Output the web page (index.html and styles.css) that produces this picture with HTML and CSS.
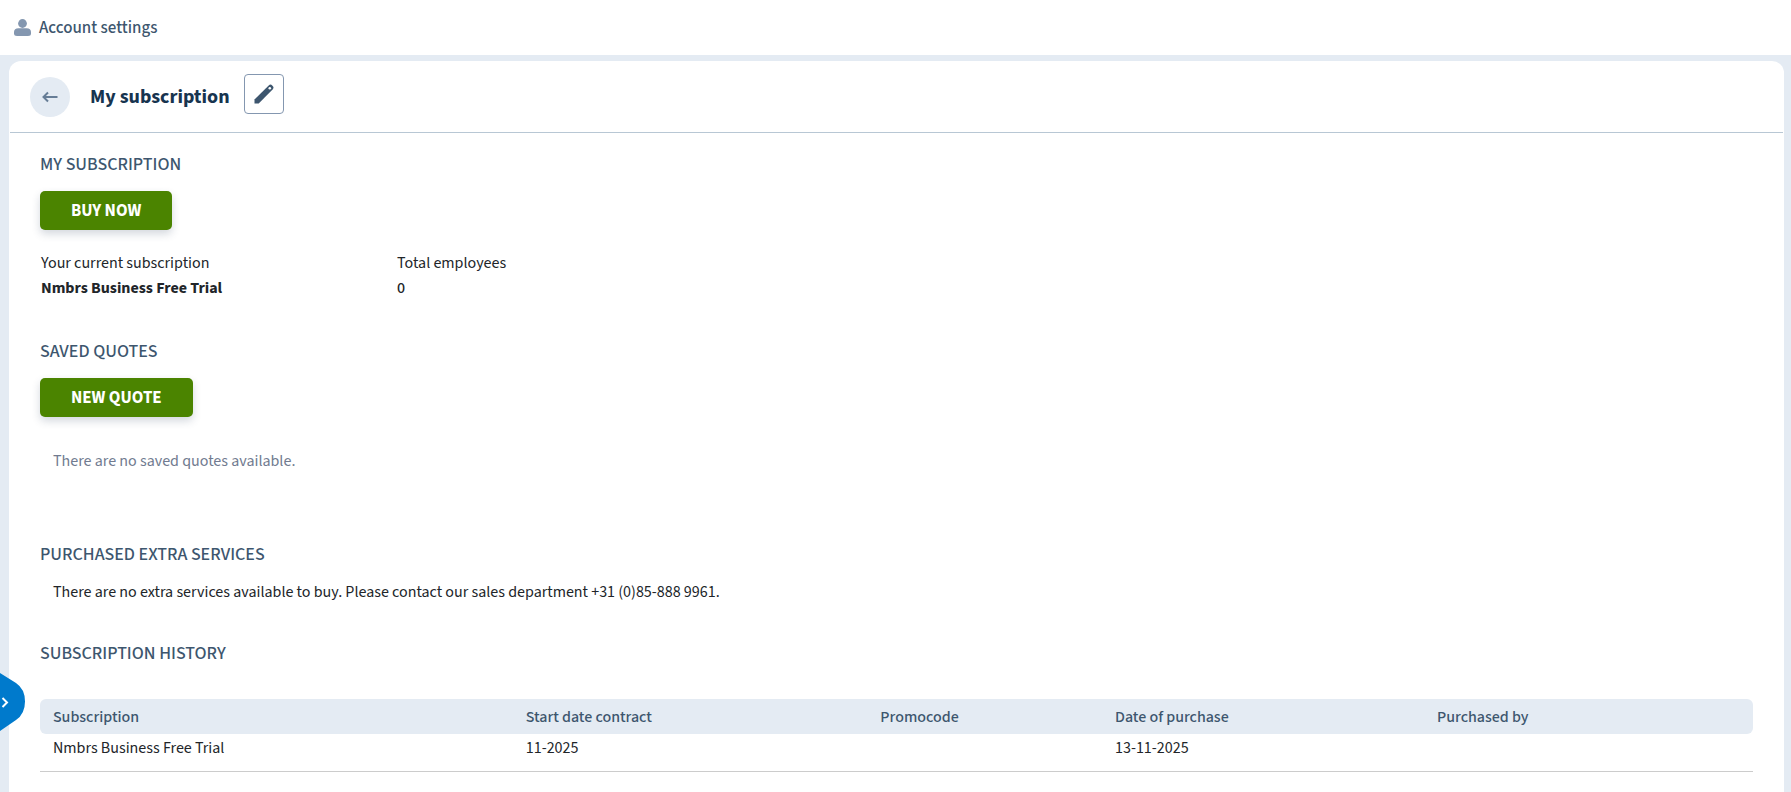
FILE: index.html
```html
<!DOCTYPE html>
<html lang="en">
<head>
<meta charset="utf-8">
<title>Account settings</title>
<link rel="stylesheet" href="styles.css">
</head>
<body>
<header class="topbar">
  <svg class="user-icon" viewBox="0 0 17 17" aria-hidden="true"><circle cx="8.500" cy="4.500" r="4.400"/><path d="M0 14.500v-1.500Q0 9.200 4.500 9.200h8Q17 9.200 17 13v1.500Q17 17 14 17H3Q0 17 0 14.500z"/></svg>
  <span class="topbar-title">Account settings</span>
</header>
<main class="panel">
  <div class="panel-head">
    <button class="back" type="button" aria-label="Back"><svg width="16" height="12" viewBox="0 0 16 12"><path d="M15.500 6H1.500M6 1.500 1.500 6 6 10.500"/></svg></button>
    <h1 class="page-title">My subscription</h1>
    <button class="edit" type="button" aria-label="Edit"><svg width="20" height="20" viewBox="0 0 20 20"><path d="M.5 15.500 14.700 1.500q1.800-1.700 3.500-.1l.5.500q1.600 1.700-.1 3.500L4.700 19.500H.5z"/><circle cx="15.800" cy="4.300" r="1.300" fill="#fff"/></svg></button>
  </div>
  <div class="content">
    <section class="section current">
      <h2 class="section-title">MY SUBSCRIPTION</h2>
      <button class="primary" type="button">BUY NOW</button>
      <dl class="facts">
        <div class="fact"><dt>Your current subscription</dt><dd>Nmbrs Business Free Trial</dd></div>
        <div class="fact"><dt>Total employees</dt><dd class="count">0</dd></div>
      </dl>
    </section>
    <section class="section quotes">
      <h2 class="section-title">SAVED QUOTES</h2>
      <button class="primary" type="button">NEW QUOTE</button>
      <p class="note muted">There are no saved quotes available.</p>
    </section>
    <section class="section services">
      <h2 class="section-title">PURCHASED EXTRA SERVICES</h2>
      <p class="note">There are no extra services available to buy. Please contact our sales department +31 (0)85-888 9961.</p>
    </section>
    <section class="section">
      <h2 class="section-title">SUBSCRIPTION HISTORY</h2>
      <table class="history">
        <colgroup><col class="c-sub"><col class="c-start"><col class="c-promo"><col class="c-date"><col></colgroup>
        <thead><tr><th scope="col">Subscription</th><th scope="col">Start date contract</th><th scope="col">Promocode</th><th scope="col">Date of purchase</th><th scope="col">Purchased by</th></tr></thead>
        <tbody><tr><td>Nmbrs Business Free Trial</td><td>11-2025</td><td></td><td>13-11-2025</td><td></td></tr></tbody>
      </table>
    </section>
  </div>
</main>
<button class="drawer" type="button" aria-label="Open menu"><svg width="25" height="60" viewBox="0 0 25 60"><path fill="#007acc" d="M0 1 16 11Q25 17 25 29.500T16 48L0 59z"/><path fill="none" stroke="#fff" stroke-width="2" d="m2.500 26 4.500 4.500L2.500 35"/></svg></button>
</body>
</html>
```
FILE: styles.css
```css
* { box-sizing: border-box; }

body {
  margin: 0;
  min-height: 100vh;
  display: flex;
  flex-direction: column;
  background: #e4ebf3;
  color: #212529;
  font: 16px/20px "Source Sans 3", "Noto Sans CJK SC", "Noto Sans", sans-serif;
}

h1, h2, p, dl, dd { margin: 0; }
button { font-family: inherit; cursor: pointer; }

.topbar {
  display: flex;
  align-items: center;
  gap: 8px;
  height: 55px;
  padding: 0 14px;
  background: #fff;
}
.user-icon { width: 17px; height: 17px; fill: #8497b0; }
.topbar-title { color: #3d566e; font-size: 17px; font-weight: 500; }

.panel {
  flex: 1;
  margin: 6px 7px 0 9px;
  background: #fff;
  border-radius: 12px 12px 0 0;
}
.panel-head {
  display: flex;
  align-items: center;
  height: 72px;
  margin: 0 1px;
  padding: 0 20px;
  border-bottom: 1px solid #b8c7d4;
}
.back {
  display: grid;
  place-items: center;
  width: 40px;
  height: 40px;
  margin-right: 20px;
  padding: 0;
  border: 0;
  border-radius: 50%;
  background: #e4ebf3;
}
.back svg { fill: none; stroke: #667d96; stroke-width: 2; }
.page-title { color: #17344f; font-size: 20px; line-height: 24px; font-weight: 700; }
.edit {
  display: grid;
  place-items: center;
  width: 40px;
  height: 40px;
  margin: 0 0 6px 14px;
  padding: 0;
  border: 1px solid #8497b0;
  border-radius: 4px;
  background: #fff;
}
.edit svg { fill: #3d566e; }

.content { padding: 20px 31px 0; }
.section-title { color: #3d566e; font-size: 18px; line-height: 24px; font-weight: 500; }
.primary {
  display: block;
  height: 39px;
  margin-top: 14px;
  padding: 0 31px;
  border: 0;
  border-radius: 5px;
  background: #4b8400;
  color: #fff;
  font-size: 17px;
  font-weight: 700;
  box-shadow: 0 4px 8px rgba(40, 60, 90, .2);
}
.current { padding-bottom: 39px; }
.facts { display: flex; margin-top: 21px; padding-left: 1px; }
.fact { width: 20.8%; }
.fact dt, .fact dd { line-height: 25px; }
.fact dd { font-weight: 700; }
.fact .count { font-weight: 500; }
.note { padding: 0 13px; }
.quotes { padding-bottom: 72px; }
.quotes .note { margin-top: 34px; }
.muted { color: #717b90; }
.services { padding-bottom: 40px; }
.services .note { margin-top: 15px; }

.history {
  width: 100%;
  margin-top: 33px;
  border-collapse: separate;
  border-spacing: 0;
  table-layout: fixed;
}
.history th, .history td { padding: 0 13px; text-align: left; }
.history th { height: 35px; background: #e4ebf3; color: #3d566e; font-weight: 500; }
.history th:first-child { border-radius: 6px 0 0 6px; }
.history th:last-child { border-radius: 0 6px 6px 0; }
.history td { height: 38px; padding-bottom: 9px; border-bottom: 1px solid #ccc; }
.c-sub { width: 27.6%; }
.c-start { width: 20.7%; }
.c-promo { width: 13.7%; }
.c-date { width: 18.8%; }

.drawer {
  position: fixed;
  left: 0;
  bottom: 60px;
  padding: 0;
  border: 0;
  background: none;
}
.drawer svg { display: block; }
```
